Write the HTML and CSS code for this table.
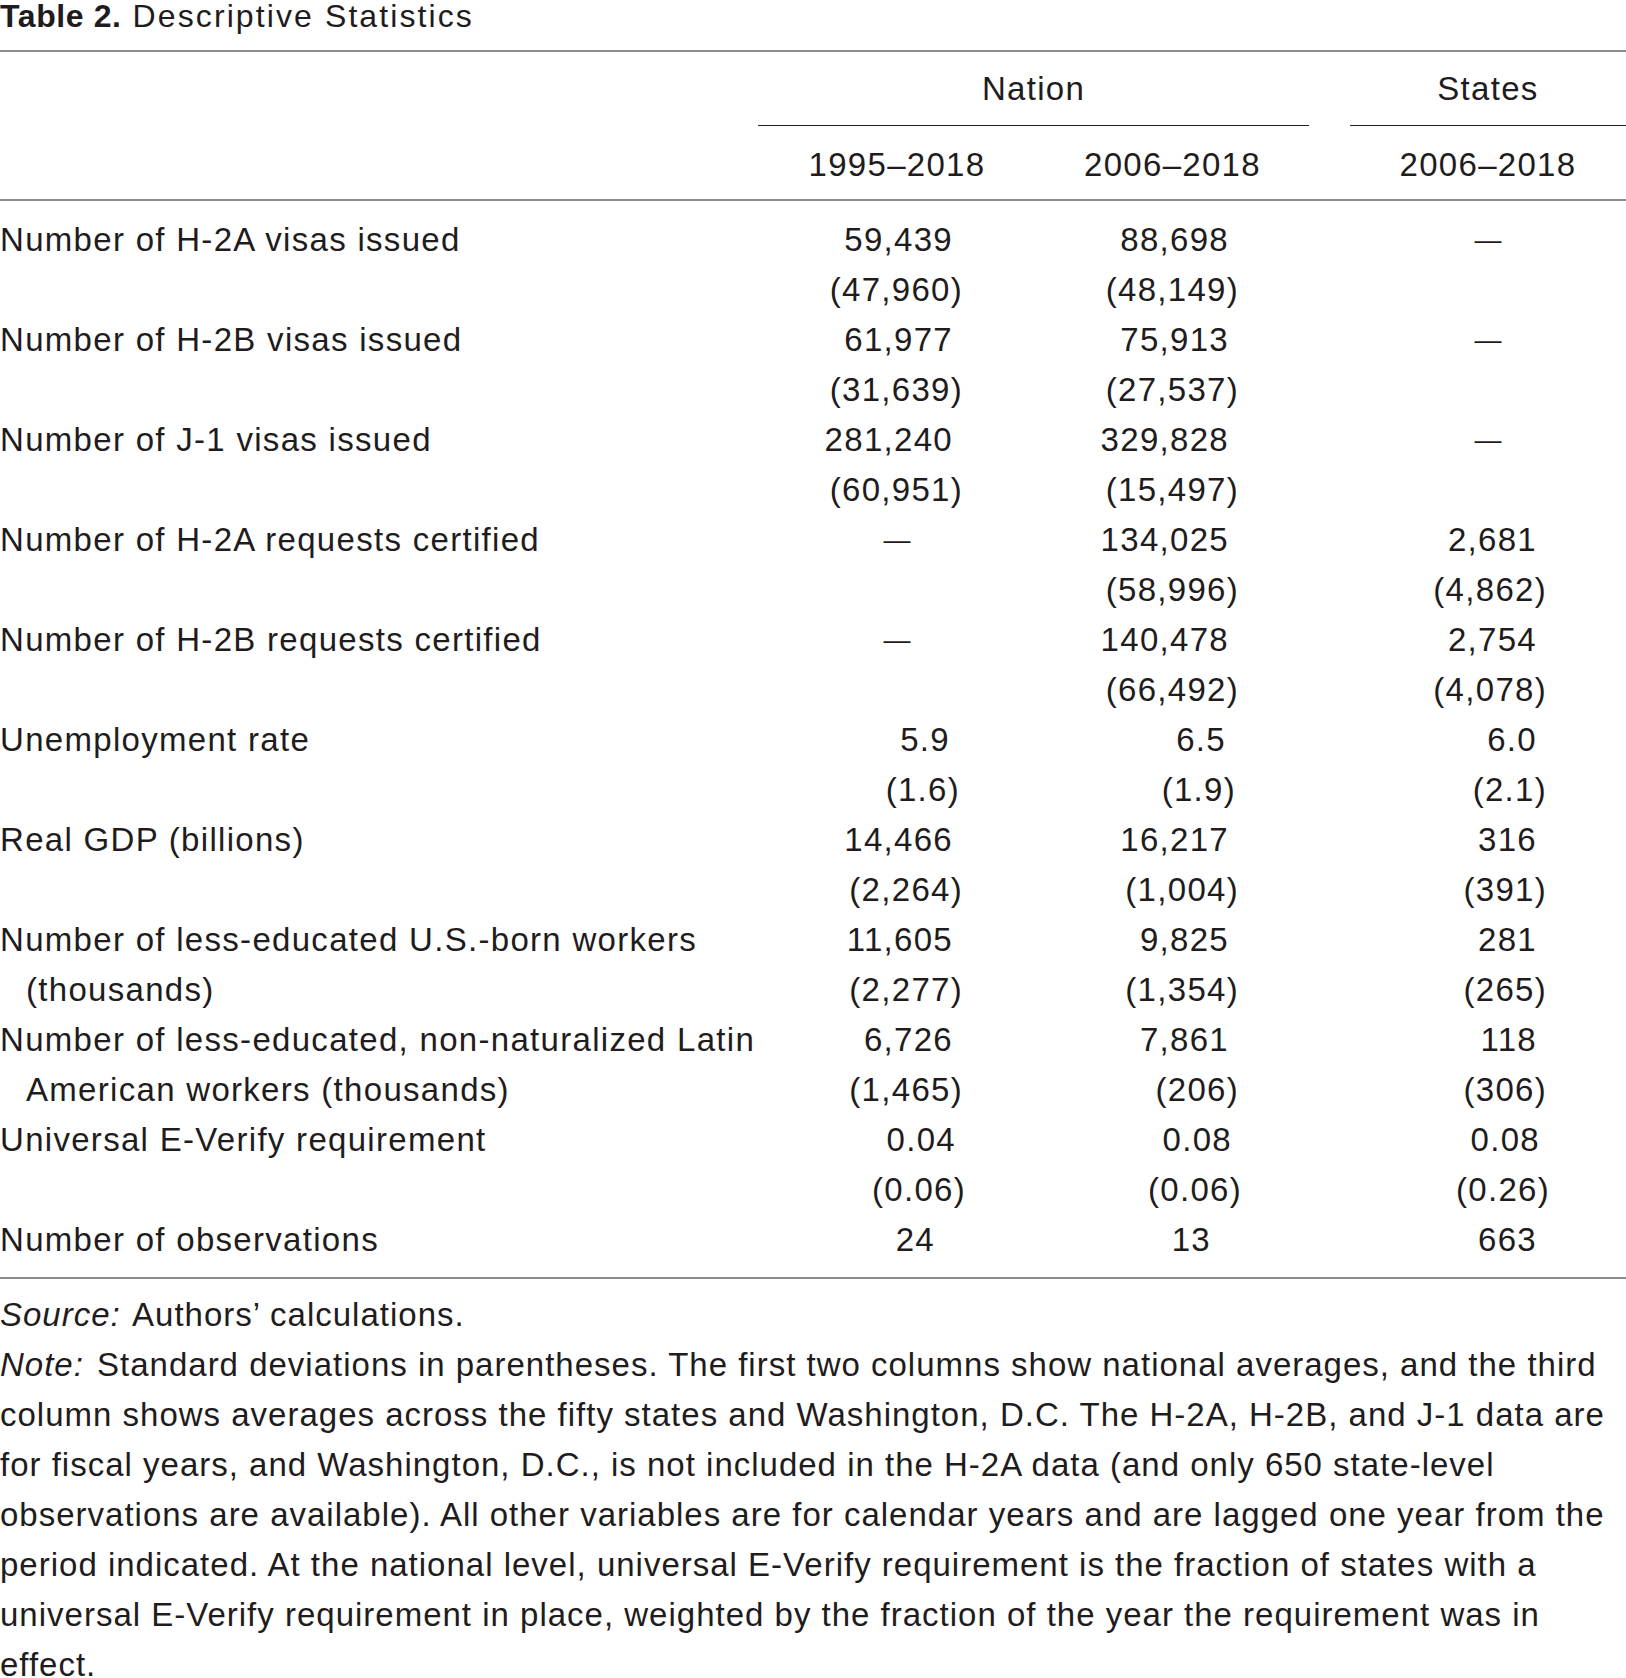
FILE: index.html
```html
<!DOCTYPE html>
<html lang="en">
<head>
<meta charset="utf-8">
<title>Table 2. Descriptive Statistics</title>
<link rel="stylesheet" href="styles.css">
</head>
<body>
<div class="page">
  <h1 class="title"><b>Table 2.</b> Descriptive Statistics</h1>
  <div class="table">
    <div class="thead">
      <div class="grid head-top">
        <div class="lab"></div>
        <div class="span2 sub">Nation</div>
        <div class="gap"></div>
        <div class="sub">States</div>
      </div>
      <div class="grid head-years">
        <div class="lab"></div>
        <div class="yr">1995–2018</div>
        <div class="yr">2006–2018</div>
        <div class="gap"></div>
        <div class="yr">2006–2018</div>
      </div>
    </div>
    <div class="tbody">
      <div class="grid row">
        <div class="lab">Number of H-2A visas issued</div>
        <div class="c c1"><div>59,439</div><div class="sd">(47,960)</div></div>
        <div class="c c2"><div>88,698</div><div class="sd">(48,149)</div></div>
        <div class="gap"></div>
        <div class="c c3"><div class="dash">—</div></div>
      </div>
      <div class="grid row">
        <div class="lab">Number of H-2B visas issued</div>
        <div class="c c1"><div>61,977</div><div class="sd">(31,639)</div></div>
        <div class="c c2"><div>75,913</div><div class="sd">(27,537)</div></div>
        <div class="gap"></div>
        <div class="c c3"><div class="dash">—</div></div>
      </div>
      <div class="grid row">
        <div class="lab">Number of J-1 visas issued</div>
        <div class="c c1"><div>281,240</div><div class="sd">(60,951)</div></div>
        <div class="c c2"><div>329,828</div><div class="sd">(15,497)</div></div>
        <div class="gap"></div>
        <div class="c c3"><div class="dash">—</div></div>
      </div>
      <div class="grid row">
        <div class="lab">Number of H-2A requests certified</div>
        <div class="c c1"><div class="dash">—</div></div>
        <div class="c c2"><div>134,025</div><div class="sd">(58,996)</div></div>
        <div class="gap"></div>
        <div class="c c3"><div>2,681</div><div class="sd">(4,862)</div></div>
      </div>
      <div class="grid row">
        <div class="lab">Number of H-2B requests certified</div>
        <div class="c c1"><div class="dash">—</div></div>
        <div class="c c2"><div>140,478</div><div class="sd">(66,492)</div></div>
        <div class="gap"></div>
        <div class="c c3"><div>2,754</div><div class="sd">(4,078)</div></div>
      </div>
      <div class="grid row">
        <div class="lab">Unemployment rate</div>
        <div class="c c1"><div class="dec">5.9</div><div class="sd dec">(1.6)</div></div>
        <div class="c c2"><div class="dec">6.5</div><div class="sd dec">(1.9)</div></div>
        <div class="gap"></div>
        <div class="c c3"><div>6.0</div><div class="sd">(2.1)</div></div>
      </div>
      <div class="grid row">
        <div class="lab">Real GDP (billions)</div>
        <div class="c c1"><div>14,466</div><div class="sd">(2,264)</div></div>
        <div class="c c2"><div>16,217</div><div class="sd">(1,004)</div></div>
        <div class="gap"></div>
        <div class="c c3"><div>316</div><div class="sd">(391)</div></div>
      </div>
      <div class="grid row">
        <div class="lab">Number of less-educated U.S.-born workers<br>(thousands)</div>
        <div class="c c1"><div>11,605</div><div class="sd">(2,277)</div></div>
        <div class="c c2"><div>9,825</div><div class="sd">(1,354)</div></div>
        <div class="gap"></div>
        <div class="c c3"><div>281</div><div class="sd">(265)</div></div>
      </div>
      <div class="grid row">
        <div class="lab">Number of less-educated, non-naturalized Latin<br>American workers (thousands)</div>
        <div class="c c1"><div>6,726</div><div class="sd">(1,465)</div></div>
        <div class="c c2"><div>7,861</div><div class="sd">(206)</div></div>
        <div class="gap"></div>
        <div class="c c3"><div>118</div><div class="sd">(306)</div></div>
      </div>
      <div class="grid row">
        <div class="lab">Universal E-Verify requirement</div>
        <div class="c c1"><div class="dec2">0.04</div><div class="sd dec2">(0.06)</div></div>
        <div class="c c2"><div class="dec2">0.08</div><div class="sd dec2">(0.06)</div></div>
        <div class="gap"></div>
        <div class="c c3"><div class="dec2">0.08</div><div class="sd dec2">(0.26)</div></div>
      </div>
      <div class="grid row single">
        <div class="lab">Number of observations</div>
        <div class="c c1"><div class="obs">24</div></div>
        <div class="c c2"><div class="obs">13</div></div>
        <div class="gap"></div>
        <div class="c c3"><div>663</div></div>
      </div>
    </div>
  </div>
  <div class="notes">
    <p><i class="lead">Source:</i> Authors’ calculations.</p>
    <p><i class="lead">Note:</i> Standard deviations in parentheses. The first two columns show national averages, and the third column shows averages across the fifty states and Washington, D.C. The H-2A, H-2B, and J-1 data are for fiscal years, and Washington, D.C., is not included in the H-2A data (and only 650 state-level observations are available). All other variables are for calendar years and are lagged one year from the period indicated. At the national level, universal E-Verify requirement is the fraction of states with a universal E-Verify requirement in place, weighted by the fraction of the year the requirement was in effect.</p>
  </div>
</div>
</body>
</html>
```

FILE: styles.css
```css
html, body {
  margin: 0;
  padding: 0;
  background: #ffffff;
}

body {
  font-family: "Liberation Sans", Arial, sans-serif;
  color: #1f1c1d;
}

.page {
  width: 1626px;
}

.title {
  margin: 0;
  font-size: 32px;
  line-height: 32px;
  font-weight: 400;
  letter-spacing: 2.1px;
  padding-bottom: 18px;
  border-bottom: 2px solid #8c8c8c;
}

.title b {
  font-weight: 700;
  letter-spacing: 0.6px;
}

.table {
  font-size: 33px;
  letter-spacing: 1.3px;
  line-height: 50px;
}

.grid {
  display: grid;
  grid-template-columns: 758px 278px 273px 41px 276px;
}

.span2 {
  grid-column: span 2;
}

.head-top {
  height: 73px;
  line-height: 73px;
}

.sub {
  text-align: center;
  border-bottom: 1.5px solid #231f20;
}

.head-years {
  padding-top: 5px;
  height: 69px;
  line-height: 69px;
  border-bottom: 2px solid #8c8c8c;
}

.yr {
  text-align: center;
}

.tbody {
  padding: 14px 0 12px;
  border-bottom: 2px solid #8c8c8c;
}

.row {
  height: 100px;
}

.row.single {
  height: 50px;
}

.lab {
  padding-left: 26px;
  text-indent: -26px;
  white-space: nowrap;
}

.c {
  text-align: right;
}

.c1 {
  padding-right: 83px;
}

.c2 {
  padding-right: 80px;
}

.c3 {
  padding-right: 89px;
}

.sd {
  margin-right: -10px;
}

.dec {
  margin-right: 3px;
}

.sd.dec {
  margin-right: -7px;
}

.dec2 {
  margin-right: -3px;
}

.sd.dec2 {
  margin-right: -13px;
}

.obs {
  margin-right: 18px;
}

.dash {
  text-align: center;
  margin-right: -89px;
  font-size: 27px;
  letter-spacing: 0;
}

.c1 .dash {
  margin-right: -83px;
}

.notes {
  font-size: 33px;
  line-height: 50px;
  letter-spacing: 1px;
  padding-top: 11px;
}

.notes p {
  margin: 0;
}

.lead {
  padding-right: 3px;
}
```
